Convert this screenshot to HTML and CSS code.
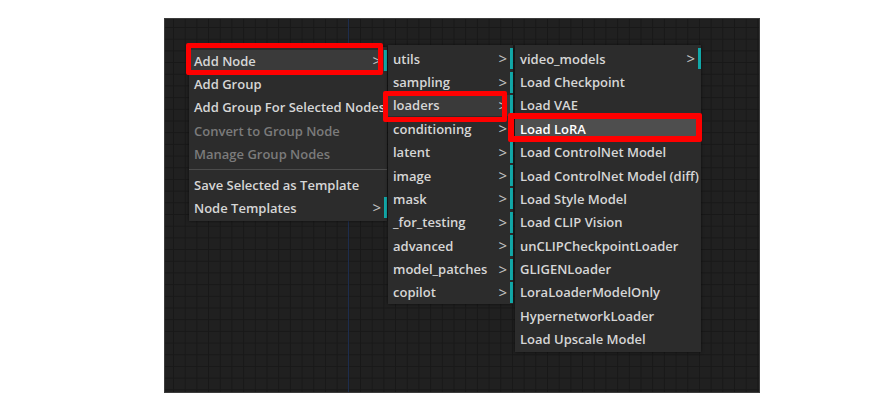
FILE: index.html
```html
<!DOCTYPE html>
<html lang="en">
<head>
    <meta charset="UTF-8">
    <title>Node editor - context menu</title>
    <link rel="stylesheet" href="styles.css">
</head>
<body>
    <!-- Graph canvas with the right-click menu open -->
    <div class="graph">
        <div class="graph-link"></div>

        <!-- Main context menu -->
        <div class="menu menu-main">
            <div class="menu-item has-sub active"><span>Add Node</span><span class="arrow">&gt;</span></div>
            <div class="menu-item"><span>Add Group</span></div>
            <div class="menu-item"><span>Add Group For Selected Nodes</span></div>
            <div class="menu-item disabled"><span>Convert to Group Node</span></div>
            <div class="menu-item disabled"><span>Manage Group Nodes</span></div>
            <div class="menu-sep"></div>
            <div class="menu-item"><span>Save Selected as Template</span></div>
            <div class="menu-item has-sub"><span>Node Templates</span><span class="arrow">&gt;</span></div>
        </div>

        <!-- Add Node categories -->
        <div class="menu menu-cats">
            <div class="menu-item has-sub"><span>utils</span><span class="arrow">&gt;</span></div>
            <div class="menu-item has-sub"><span>sampling</span><span class="arrow">&gt;</span></div>
            <div class="menu-item has-sub active"><span>loaders</span><span class="arrow">&gt;</span></div>
            <div class="menu-item has-sub"><span>conditioning</span><span class="arrow">&gt;</span></div>
            <div class="menu-item has-sub"><span>latent</span><span class="arrow">&gt;</span></div>
            <div class="menu-item has-sub"><span>image</span><span class="arrow">&gt;</span></div>
            <div class="menu-item has-sub"><span>mask</span><span class="arrow">&gt;</span></div>
            <div class="menu-item has-sub"><span>_for_testing</span><span class="arrow">&gt;</span></div>
            <div class="menu-item has-sub"><span>advanced</span><span class="arrow">&gt;</span></div>
            <div class="menu-item has-sub"><span>model_patches</span><span class="arrow">&gt;</span></div>
            <div class="menu-item has-sub"><span>copilot</span><span class="arrow">&gt;</span></div>
        </div>

        <!-- Loaders -->
        <div class="menu menu-loaders">
            <div class="menu-item has-sub"><span>video_models</span><span class="arrow">&gt;</span></div>
            <div class="menu-item"><span>Load Checkpoint</span></div>
            <div class="menu-item"><span>Load VAE</span></div>
            <div class="menu-item hover"><span>Load LoRA</span></div>
            <div class="menu-item"><span>Load ControlNet Model</span></div>
            <div class="menu-item"><span>Load ControlNet Model (diff)</span></div>
            <div class="menu-item"><span>Load Style Model</span></div>
            <div class="menu-item"><span>Load CLIP Vision</span></div>
            <div class="menu-item"><span>unCLIPCheckpointLoader</span></div>
            <div class="menu-item"><span>GLIGENLoader</span></div>
            <div class="menu-item"><span>LoraLoaderModelOnly</span></div>
            <div class="menu-item"><span>HypernetworkLoader</span></div>
            <div class="menu-item"><span>Load Upscale Model</span></div>
        </div>

        <!-- Highlight frames -->
        <div class="mark mark-add"></div>
        <div class="mark mark-loaders"></div>
        <div class="mark mark-lora"></div>
    </div>
</body>
</html>
```

FILE: styles.css
```css
/* General */
* {
    margin: 0;
    padding: 0;
    box-sizing: border-box;
}

body {
    background-color: #ffffff;
    font-family: 'Open Sans', 'Liberation Sans', sans-serif;
}

/* Graph canvas */
.graph {
    position: relative;
    width: 596px;
    height: 375px;
    margin: 18px 0 0 164px;
    border: 1px solid #3c3c3c;
    background-color: #202020;
    background-image:
        linear-gradient(to right, #181818 1px, transparent 1px),
        linear-gradient(to bottom, #181818 1px, transparent 1px);
    background-size: 11.7px 11.7px;
    background-position: 8px 8px;
    overflow: hidden;
}

.graph-link {
    position: absolute;
    top: 0;
    bottom: 0;
    left: 183px;
    width: 1px;
    background-color: #1d2d4d;
}

/* Context menus */
.menu {
    position: absolute;
    display: flex;
    flex-direction: column;
    padding: 2px 0 0;
    background-color: #2c2c2c;
    box-shadow: 0 0 3px rgba(0, 0, 0, 0.6);
}

.menu-main {
    left: 24px;
    top: 28px;
    width: 198px;
    padding-bottom: 1px;
}

.menu-cats {
    left: 223px;
    top: 26px;
    width: 125px;
}

.menu-loaders {
    left: 350px;
    top: 26px;
    width: 186px;
    padding-bottom: 1px;
}

.menu-item {
    display: flex;
    justify-content: space-between;
    align-items: center;
    height: 21px;
    margin: 1.2px 0;
    padding: 0 3px 0 5px;
    color: #d6d6d6;
    font-size: 13px;
    font-weight: 600;
    white-space: nowrap;
}

.menu-item.has-sub {
    border-right: 3px solid #12a8a8;
}

.menu-item .arrow {
    color: #c4c4c4;
    font-weight: 400;
    font-size: 15px;
    line-height: 1;
}

.menu-item.active {
    background-color: #3a3a3a;
}

.menu-item.hover {
    background-color: #4e4e4e;
    color: #ffffff;
}

.menu-item.disabled {
    color: #7b7b7b;
}

.menu-sep {
    height: 7px;
    display: flex;
    align-items: center;
}

.menu-sep::before {
    content: '';
    flex: 1;
    height: 1px;
    background-color: #4c4c4c;
}

/* Red frames */
.mark {
    position: absolute;
    border: 5px solid #ff0000;
    border-radius: 2px;
}

.mark-add {
    left: 21px;
    top: 24px;
    width: 197px;
    height: 32px;
}

.mark-loaders {
    left: 218px;
    top: 72px;
    width: 124px;
    height: 31px;
}

.mark-lora {
    left: 343px;
    top: 94px;
    width: 194px;
    height: 29px;
    border-width: 6px;
}
```
